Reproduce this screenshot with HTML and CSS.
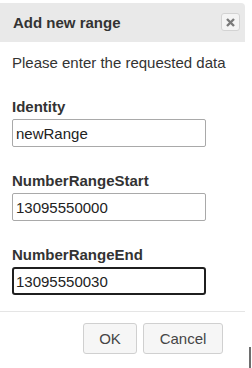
FILE: index.html
```html
<!DOCTYPE html>
<html lang="en">
<head>
<meta charset="UTF-8" />
<title>Add new range</title>
<link rel="stylesheet" href="styles.css">
</head>
<body>

  <!-- Dialog -->
  <div class="dialog">
    <div class="dialog-header">
      <span class="dialog-title">Add new range</span>
      <button class="close-btn" title="Close">
        <svg width="9" height="9" viewBox="0 0 9 9">
          <path d="M1 1 L8 8 M8 1 L1 8" stroke="#7a7a7a" stroke-width="2.4" />
        </svg>
      </button>
    </div>

    <div class="dialog-body">
      <p class="intro">Please enter the requested data</p>

      <div class="field">
        <label for="identity">Identity</label>
        <input type="text" id="identity" value="newRange" />
      </div>

      <div class="field">
        <label for="range-start">NumberRangeStart</label>
        <input type="text" id="range-start" value="13095550000" />
      </div>

      <div class="field last">
        <label for="range-end">NumberRangeEnd</label>
        <input type="text" id="range-end" class="focused" value="13095550030" />
      </div>
    </div>

    <div class="dialog-footer">
      <button class="btn btn-ok">OK</button>
      <button class="btn btn-cancel">Cancel</button>
    </div>
  </div>

  <div class="edge-mark"></div>

</body>
</html>
```

FILE: styles.css
```css
:root {
  --header-bg: #e9e9e9;
  --text: #333333;
  --line: #e5e5e5;
}

body {
  font-family: 'Liberation Sans', Arial, sans-serif;
  font-size: 15px;
  color: var(--text);
  background: #ffffff;
  margin: 0;
  padding: 0;
}

.dialog {
  width: 245px;
  margin-top: 3px;
}

.dialog-header {
  background: var(--header-bg);
  height: 39px;
  border-radius: 0 4px 0 0;
  padding: 0 5px 0 13px;
  display: flex;
  justify-content: space-between;
  align-items: center;
}

.dialog-title {
  font-weight: bold;
  font-size: 15px;
  line-height: 20px;
}

.close-btn {
  width: 19px;
  height: 18px;
  padding: 0;
  border: 1px solid #d3d3d3;
  border-radius: 3px;
  background: #f4f4f4;
  display: flex;
  justify-content: center;
  align-items: center;
  margin-top: -1px;
}

.dialog-body {
  padding: 11px 12px 16px 12px;
}

.intro {
  margin: 0 0 24px 0;
  line-height: 20px;
}

.field {
  display: flex;
  flex-direction: column;
  margin-bottom: 24px;
}

.field.last {
  margin-bottom: 0;
}

.field label {
  font-weight: bold;
  line-height: 20px;
  margin-bottom: 2px;
}

.field input {
  width: 194px;
  height: 28px;
  box-sizing: border-box;
  font-family: inherit;
  font-size: 15px;
  color: #222;
  padding: 0 3px;
  border: 1px solid #a9a9a9;
  border-radius: 2px;
  outline: none;
}

.field input.focused {
  border: 2px solid #1f1f1f;
  border-radius: 3px;
  padding: 0 2px;
}

.dialog-footer {
  border-top: 1px solid var(--line);
  padding: 11px 22px 0 0;
  display: flex;
  justify-content: flex-end;
  gap: 6px;
}

.btn {
  height: 31px;
  font-family: inherit;
  font-size: 15px;
  color: #454545;
  background: #f6f6f6;
  border: 1px solid #d0d0d0;
  border-radius: 3px;
  padding: 0 16px;
}

.btn-ok {
  width: 54px;
  padding: 0;
}

.btn-cancel {
  width: 80px;
  padding: 0;
}

.edge-mark {
  position: absolute;
  left: 249px;
  top: 347px;
  width: 2px;
  height: 21px;
  background: #6e6e6e;
}
```
